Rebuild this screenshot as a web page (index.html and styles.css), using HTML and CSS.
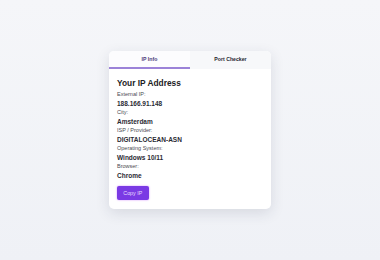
FILE: index.html
```html
<!DOCTYPE html>
<html lang="en">
<head>
    <meta charset="UTF-8">
    <meta name="viewport" content="width=device-width, initial-scale=1.0">
    <title>IP Info</title>
    <link rel="stylesheet" href="styles.css">
</head>
<body>
    <div class="card">
        <div class="tabs">
            <div class="tab active">IP Info</div>
            <div class="tab">Port Checker</div>
        </div>

        <div class="panel">
            <h2>Your IP Address</h2>

            <div class="label">External IP:</div>
            <div class="value">188.166.91.148</div>

            <div class="label">City:</div>
            <div class="value">Amsterdam</div>

            <div class="label">ISP / Provider:</div>
            <div class="value">DIGITALOCEAN-ASN</div>

            <div class="label">Operating System:</div>
            <div class="value">Windows 10/11</div>

            <div class="label">Browser:</div>
            <div class="value">Chrome</div>

            <button class="button">Copy IP</button>
        </div>
    </div>
</body>
</html>
```

FILE: styles.css
```css
html, body {
    height: 100%;
}
body {
    margin: 0;
    font-family: "Liberation Sans", Arial, sans-serif;
    background: linear-gradient(180deg, #f5f6f9 0%, #eff1f6 100%);
    display: flex;
    align-items: center;
    justify-content: center;
}
.card {
    width: 162px;
    height: 158px;
    background-color: #fff;
    border-radius: 5px;
    box-shadow: 0 4px 14px rgba(40, 50, 80, 0.13);
    overflow: hidden;
}
.tabs {
    display: flex;
    background-color: #f7f8fa;
}
.tab {
    flex: 1;
    height: 16px;
    line-height: 16px;
    text-align: center;
    font-size: 5.2px;
    font-weight: bold;
    color: #25252f;
    border-bottom: 2px solid transparent;
}
.tab.active {
    color: #4b3c7a;
    background-color: #fcfcfe;
    border-bottom-color: #9b82d8;
}
.panel {
    padding: 8px 8px 10px;
}
h2 {
    margin: 0;
    font-size: 8.35px;
    line-height: 13px;
    font-weight: bold;
    color: #1c1c24;
}
.label {
    font-size: 5.5px;
    line-height: 9px;
    color: #4a4a52;
}
.value {
    font-size: 6.5px;
    line-height: 9px;
    font-weight: bold;
    color: #2a2a33;
}
.button {
    margin-top: 6px;
    background-color: #7a3ae4;
    border: none;
    color: #e6dcff;
    padding: 0;
    width: 31.5px;
    height: 13.6px;
    font-family: inherit;
    font-size: 5.3px;
    border-radius: 2px;
    box-shadow: 0 0 2px rgba(190, 90, 255, 0.7);
    cursor: pointer;
}
```
